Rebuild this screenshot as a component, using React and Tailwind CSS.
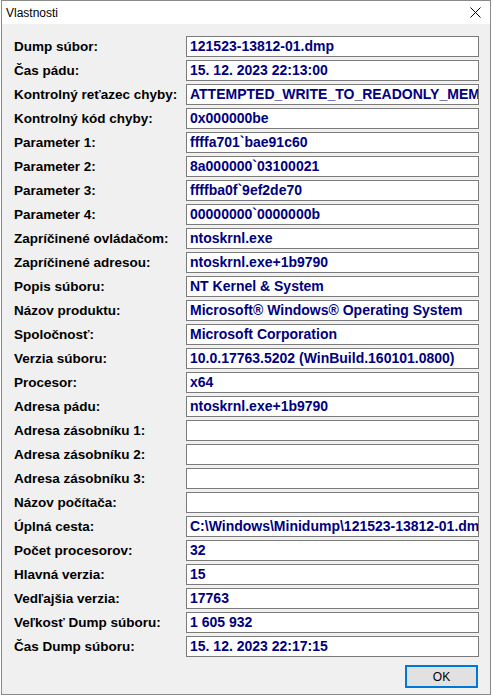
const rows = [
  ["Dump súbor:", "121523-13812-01.dmp"],
  ["Čas pádu:", "15. 12. 2023 22:13:00"],
  ["Kontrolný reťazec chyby:", "ATTEMPTED_WRITE_TO_READONLY_MEMORY"],
  ["Kontrolný kód chyby:", "0x000000be"],
  ["Parameter 1:", "ffffa701`bae91c60"],
  ["Parameter 2:", "8a000000`03100021"],
  ["Parameter 3:", "ffffba0f`9ef2de70"],
  ["Parameter 4:", "00000000`0000000b"],
  ["Zapríčinené ovládačom:", "ntoskrnl.exe"],
  ["Zapríčinené adresou:", "ntoskrnl.exe+1b9790"],
  ["Popis súboru:", "NT Kernel & System"],
  ["Názov produktu:", "Microsoft® Windows® Operating System"],
  ["Spoločnosť:", "Microsoft Corporation"],
  ["Verzia súboru:", "10.0.17763.5202 (WinBuild.160101.0800)"],
  ["Procesor:", "x64"],
  ["Adresa pádu:", "ntoskrnl.exe+1b9790"],
  ["Adresa zásobníku 1:", ""],
  ["Adresa zásobníku 2:", ""],
  ["Adresa zásobníku 3:", ""],
  ["Názov počítača:", ""],
  ["Úplná cesta:", "C:\\Windows\\Minidump\\121523-13812-01.dmp"],
  ["Počet procesorov:", "32"],
  ["Hlavná verzia:", "15"],
  ["Vedľajšia verzia:", "17763"],
  ["Veľkosť Dump súboru:", "1 605 932"],
  ["Čas Dump súboru:", "15. 12. 2023 22:17:15"],
];

export default function App() {
  return (
    <div className="w-[493px] h-[696px] bg-white overflow-hidden font-['Liberation_Sans',Arial,sans-serif]">
      <div className="ml-px w-[490px] h-[695px] border border-[#8a8a8a] flex flex-col">
        {/* Title bar */}
        <div className="h-[23px] bg-white flex items-center justify-between pl-[4px] pr-[9px]">
          <span className="text-[12px] text-black">Vlastnosti</span>
          <svg width="11" height="11" viewBox="0 0 11 11">
            <path d="M0.5 0.5 L10.5 10.5 M10.5 0.5 L0.5 10.5" stroke="#000" strokeWidth="1" />
          </svg>
        </div>

        {/* Body */}
        <div className="flex-1 bg-[#f0f0f0] pt-[12px] pl-[12px]">
          <div className="flex flex-col gap-[3px]">
            {rows.map(([label, value]) => (
              <div key={label} className="flex items-center h-[21px]">
                <div className="w-[172px] text-[13.5px] font-bold text-black whitespace-nowrap leading-none">
                  {label}
                </div>
                <div className="w-[293px] h-[21px] bg-white border border-[#7a7a7a] overflow-hidden whitespace-nowrap pl-[3px] text-[14px] font-bold text-[#000080] leading-[19px]">
                  {value}
                </div>
              </div>
            ))}
          </div>

          <div className="flex justify-end pr-[12px] mt-[8px]">
            <button className="w-[73px] h-[23px] bg-[#e1e1e1] border-2 border-[#0078d7] text-[12px] text-black">
              OK
            </button>
          </div>
        </div>
      </div>
    </div>
  );
}
